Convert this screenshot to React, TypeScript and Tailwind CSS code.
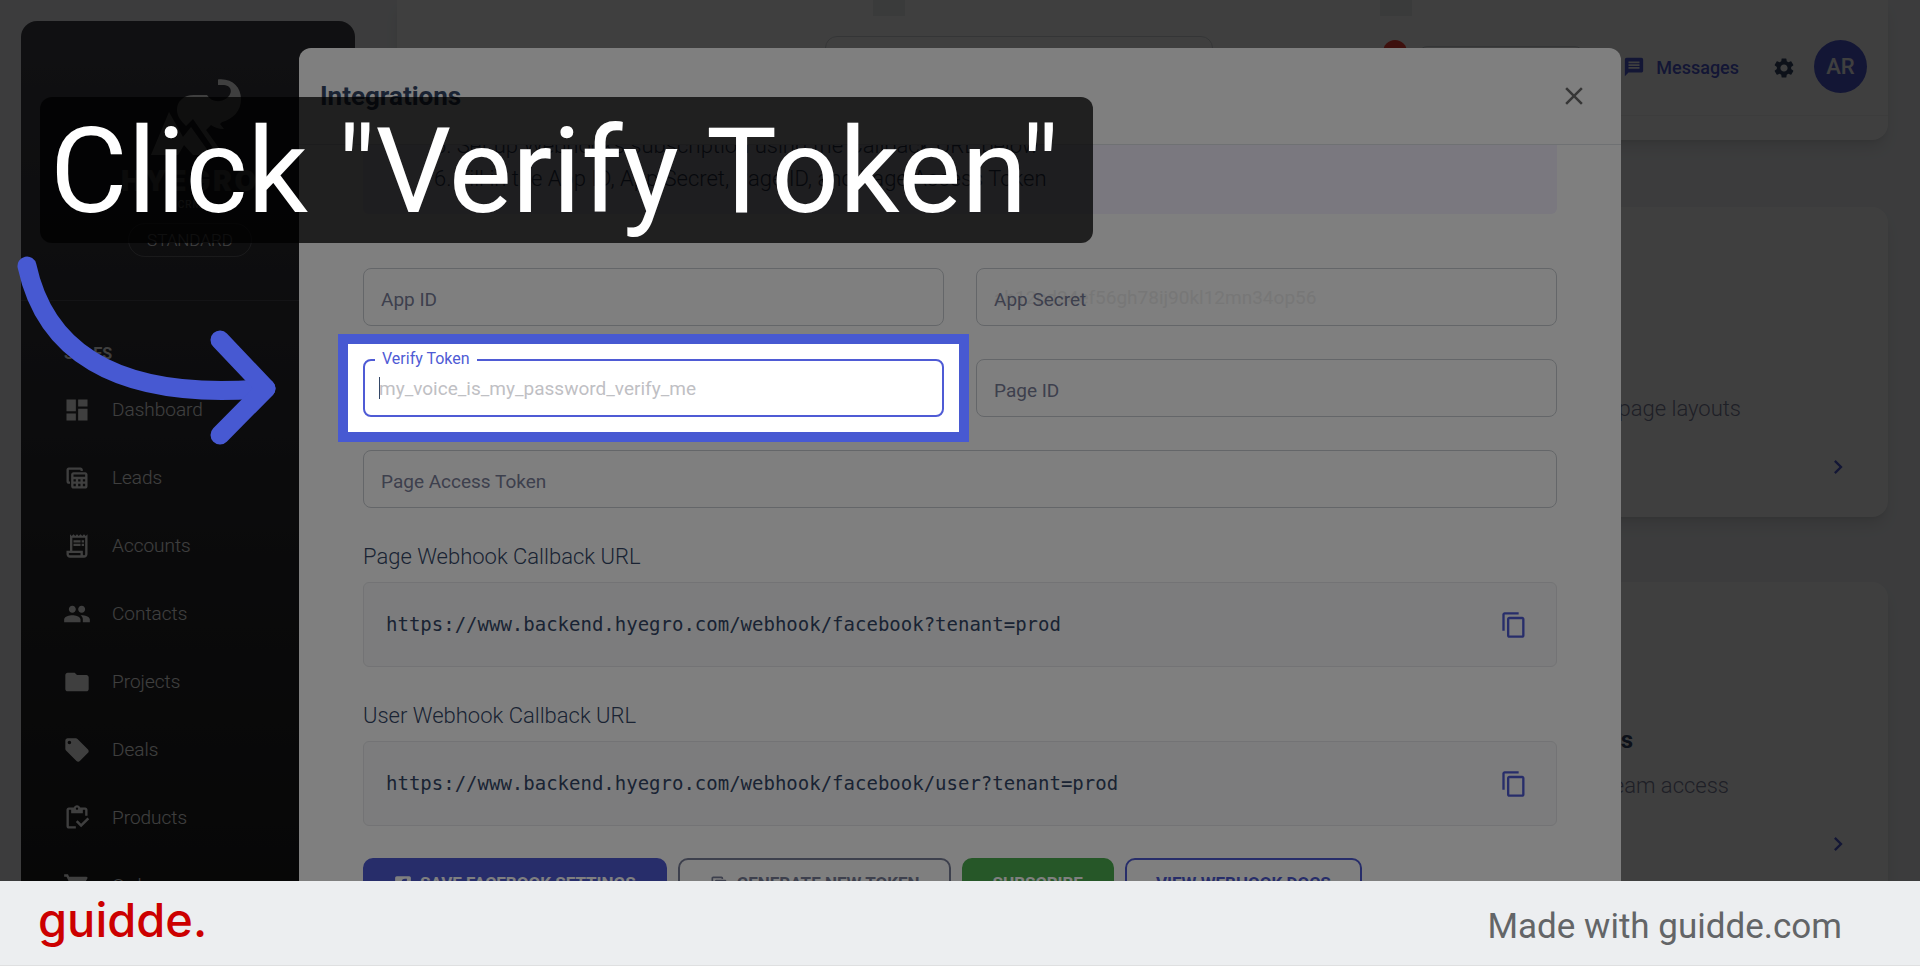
import type { ReactNode } from "react";
import type { IconType } from "react-icons";
import {
  MdChevronRight,
  MdClose,
  MdContentCopy,
  MdDashboard,
  MdFolder,
  MdLocalOffer,
  MdMessage,
  MdOutlineInventory,
  MdOutlineReceiptLong,
  MdOutlineTableView,
  MdPeople,
  MdSettings,
  MdShoppingCart,
} from "react-icons/md";
import { FaFacebookSquare } from "react-icons/fa";

const navItems: { label: string; icon: IconType }[] = [
  { label: "Dashboard", icon: MdDashboard },
  { label: "Leads", icon: MdOutlineTableView },
  { label: "Accounts", icon: MdOutlineReceiptLong },
  { label: "Contacts", icon: MdPeople },
  { label: "Projects", icon: MdFolder },
  { label: "Deals", icon: MdLocalOffer },
  { label: "Products", icon: MdOutlineInventory },
  { label: "Orders", icon: MdShoppingCart },
];

function Logo() {
  return (
    <svg viewBox="0 0 94 78" className="ml-3 h-[78px] w-[94px]" fill="#fff" aria-hidden="true">
      <path d="M69 0.500C83-1 92 8 92 20 92 32 84 40 73 43L71 45 75 50C69 50 65 48 62 46L57 51 75 76H69L44 40 37 47C32 42 28 37 28 31 28 22 35 16 45 16H58C61 21 66 23 71 22 83 20 86 7 75 6H69Z" />
      <path d="M20 33 34 58 42 48 62 76H44L35 66 29 76H2Z" />
    </svg>
  );
}

function Sidebar() {
  return (
    <aside className="mt-[21px] ml-[21px] flex h-[980px] w-[334px] shrink-0 flex-col rounded-2xl bg-gradient-to-b from-[#42424a] to-[#191919] text-white">
      <div className="flex flex-col items-center border-b border-white/15 pt-[58px] pb-[43px] pl-1">
        <Logo />
        <p className="mt-2 text-center font-['Inter'] text-[28px] leading-8 font-black tracking-widest opacity-60">HYEGRO</p>
        <p className="text-center text-[10px] leading-4 tracking-widest">CRM</p>
        <span className="mt-[10px] rounded-full border border-white/25 px-[18px] text-[17px] leading-8 font-light">STANDARD</span>
      </div>
      <nav aria-label="Sales">
        <h2 className="mt-[43px] mb-3 ml-[43px] text-[16px] leading-5 font-bold">SALES</h2>
        <ul>
          {navItems.map(({ label, icon: Icon }) => (
            <li key={label}>
              <a href="#" className="flex h-[68px] items-center gap-[21px] pl-[42px] text-[19px] font-light">
                <Icon className="size-7" />
                {label}
              </a>
            </li>
          ))}
        </ul>
      </nav>
    </aside>
  );
}

function TopBar() {
  return (
    <header className="h-[140px] rounded-b-2xl bg-white shadow-lg">
      <div className="flex h-4 gap-[475px] pl-[476px]">
        <span className="w-8 bg-[#e9ecef]" />
        <span className="w-8 bg-[#e9ecef]" />
      </div>
      <div className="flex h-[100px] items-start justify-end border-b border-[#f2f2f2] pt-6 pr-[21px] text-[#4f5bd5]">
        <input aria-label="Search" className="-mt-1 mr-[170px] h-14 w-[388px] rounded-xl border border-[#d2d6da]" />
        <span className="mr-3 size-6 rounded-full bg-[#f44335]" />
        <span className="mt-[6px] mr-10 h-10 w-[164px] rounded-lg border border-[#d2d6da]" />
        <a href="#" className="mr-[33px] flex h-[54px] items-center gap-[11px] text-[18px] font-medium">
          <MdMessage className="size-[22px]" />
          Messages
        </a>
        <button type="button" aria-label="Settings" className="mr-[18px] flex h-14 items-center text-[#344767]">
          <MdSettings className="size-6" />
        </button>
        <span className="grid size-[53px] place-items-center rounded-full bg-[#4f5bd5] text-[22px] font-medium text-white">AR</span>
      </div>
    </header>
  );
}

function Background() {
  return (
    <div className="absolute inset-0 flex overflow-hidden bg-[#f0f2f5]">
      <Sidebar />
      <div className="mr-8 ml-[42px] flex-1">
        <TopBar />
        <div className="mt-[67px] flex flex-col gap-[65px]">
          <section className="flex h-[310px] flex-col rounded-2xl bg-white pr-9 text-right shadow-lg">
            <p className="mt-[186px] pr-[111px] text-[22px] leading-[32px] font-light text-[#7b809a]">page layouts</p>
            <MdChevronRight className="mt-7 size-7 self-end text-[#4f5bd5]" />
          </section>
          <section className="flex h-[400px] flex-col rounded-2xl bg-white pr-9 text-right shadow-lg">
            <h2 className="mt-[142px] pr-[219px] text-[24px] leading-[32px] font-bold text-[#344767]">Permissions</h2>
            <p className="mt-[14px] pr-[123px] text-[22px] leading-[32px] font-light text-[#7b809a]">team access</p>
            <MdChevronRight className="mt-7 size-7 self-end text-[#4f5bd5]" />
          </section>
        </div>
      </div>
    </div>
  );
}

function Field({ id, label, placeholder = "", wide = false }: { id: string; label: string; placeholder?: string; wide?: boolean }) {
  return (
    <div className={wide ? "col-span-2 grid" : "grid"}>
      <input
        id={id}
        placeholder={placeholder}
        className="col-start-1 row-start-1 h-[58px] rounded-lg border border-[#c9cdd2] px-[17px] text-[19px] placeholder:text-[#eeeeee]"
      />
      <label htmlFor={id} className="col-start-1 row-start-1 ml-[18px] self-center justify-self-start pt-[6px] text-[19px] leading-6 text-[#7b809a]">
        {label}
      </label>
    </div>
  );
}

function FocusedField() {
  return (
    <div className="relative">
      <input
        id="verify-token"
        placeholder="my_voice_is_my_password_verify_me"
        className="h-[58px] w-full rounded-lg border-2 border-[#4f5bd5] px-[14px] text-[19px] text-[#495057] outline-none placeholder:text-[#bfc0c4]"
      />
      <label htmlFor="verify-token" className="absolute -top-3 left-3 bg-white px-[7px] text-[16px] leading-6 text-[#4f5bd5]">
        Verify Token
      </label>
      <span className="absolute top-[18px] left-4 h-[22px] w-px bg-[#344767]" />
      <div className="pointer-events-none absolute -inset-[25px] z-10 border-[10px] border-[#4759d2] shadow-[0_0_0_2000px_rgba(0,0,0,0.5)]" />
    </div>
  );
}

function UrlRow({ title, url }: { title: string; url: string }) {
  return (
    <section className="mt-9">
      <h3 className="mb-3 text-[22px] leading-[26px] font-light text-[#344767]">{title}</h3>
      <div className="flex h-[85px] items-center justify-between rounded-md border border-[#e6e7ea] bg-[#f8f9fa] pr-7 pl-[22px]">
        <code className="font-['DejaVu_Sans_Mono',monospace] text-[19px] text-[#344767]">{url}</code>
        <button type="button" aria-label={`Copy ${title}`} className="text-[#4f5bd5]">
          <MdContentCopy className="size-7" />
        </button>
      </div>
    </section>
  );
}

function ActionButton({ className, children }: { className: string; children: ReactNode }) {
  return (
    <button type="button" className={`flex h-[51px] items-center gap-2 rounded-[10px] border-2 px-[29px] text-[17px] font-bold ${className}`}>
      {children}
    </button>
  );
}

function Modal() {
  return (
    <div className="absolute inset-0 flex items-start justify-center bg-black/50 pt-12">
      <div role="dialog" aria-labelledby="dialog-title" className="w-full max-w-[1322px] rounded-xl bg-white pb-10">
        <div className="flex h-[97px] items-center justify-between border-b border-[#dee2e6] pr-8 pl-[21px]">
          <h1 id="dialog-title" className="text-[26px] font-bold text-[#344767]">Integrations</h1>
          <button type="button" aria-label="Close" className="text-[#6c6c6c]">
            <MdClose className="size-[30px]" />
          </button>
        </div>
        <div className="px-16">
          <ol
            start={5}
            className="flex h-[69px] list-inside list-decimal flex-col justify-end overflow-hidden rounded-b-md bg-[#f4f0fe] pb-[19px] pl-[71px] text-[22px] leading-[33px] font-light text-[#344767]"
          >
            <li className="shrink-0">Set up Webhooks subscription using the Callback URL below</li>
            <li className="shrink-0">Fill in the App ID, App Secret, Page ID, and Page Access Token</li>
          </ol>
          <form className="mt-[54px] grid grid-cols-2 gap-x-8 gap-y-[33px]">
            <Field id="app-id" label="App ID" />
            <Field id="app-secret" label="App Secret" placeholder="ab12cd34ef56gh78ij90kl12mn34op56" />
            <FocusedField />
            <Field id="page-id" label="Page ID" />
            <Field id="page-access-token" label="Page Access Token" wide />
          </form>
          <UrlRow title="Page Webhook Callback URL" url="https://www.backend.hyegro.com/webhook/facebook?tenant=prod" />
          <UrlRow title="User Webhook Callback URL" url="https://www.backend.hyegro.com/webhook/facebook/user?tenant=prod" />
          <div className="mt-8 flex gap-[11px]">
            <ActionButton className="border-[#4f5bd5] bg-[#4f5bd5] text-white">
              <FaFacebookSquare className="size-[18px]" />
              SAVE FACEBOOK SETTINGS
            </ActionButton>
            <ActionButton className="border-[#7b809a] text-[#7b809a]">
              <MdOutlineTableView className="size-5" />
              GENERATE NEW TOKEN
            </ActionButton>
            <ActionButton className="border-[#4caf50] bg-[#4caf50] text-white">SUBSCRIBE</ActionButton>
            <ActionButton className="border-[#4f5bd5] text-[#4f5bd5]">VIEW WEBHOOK DOCS</ActionButton>
          </div>
        </div>
      </div>
    </div>
  );
}

function Callout() {
  return (
    <>
      <p className="absolute top-[97px] left-10 z-20 rounded-xl bg-black/75 pt-1 pr-[34px] pl-[10px] font-['Roboto',sans-serif] text-[119px] leading-[142px] whitespace-nowrap text-white">
        Click "Verify Token"
      </p>
      <svg
        viewBox="0 0 270 200"
        className="absolute top-[250px] left-[10px] z-20 h-[200px] w-[270px]"
        fill="none"
        stroke="#4759d2"
        strokeWidth="19"
        strokeLinecap="round"
        strokeLinejoin="round"
        aria-hidden="true"
      >
        <path d="M17 16C34 95 98 152 256 138.500" />
        <path d="M210 90 256 138.500 210 185" />
      </svg>
    </>
  );
}

export default function App() {
  return (
    <div className="flex h-screen flex-col font-['Roboto',sans-serif]">
      <main className="relative min-h-0 flex-1 overflow-hidden">
        <Background />
        <Modal />
        <Callout />
      </main>
      <footer className="flex h-[85px] shrink-0 items-center justify-between border-b border-[#dfe0e1] bg-[#eceef0] pr-[78px] pl-[38px]">
        <span className="pb-2 font-['Inter',sans-serif] text-[47px] leading-none font-medium text-[#cc0000]">guidde.</span>
        <a href="#" className="pt-[6px] text-[35px] leading-none text-[#636567]">Made with guidde.com</a>
      </footer>
    </div>
  );
}
